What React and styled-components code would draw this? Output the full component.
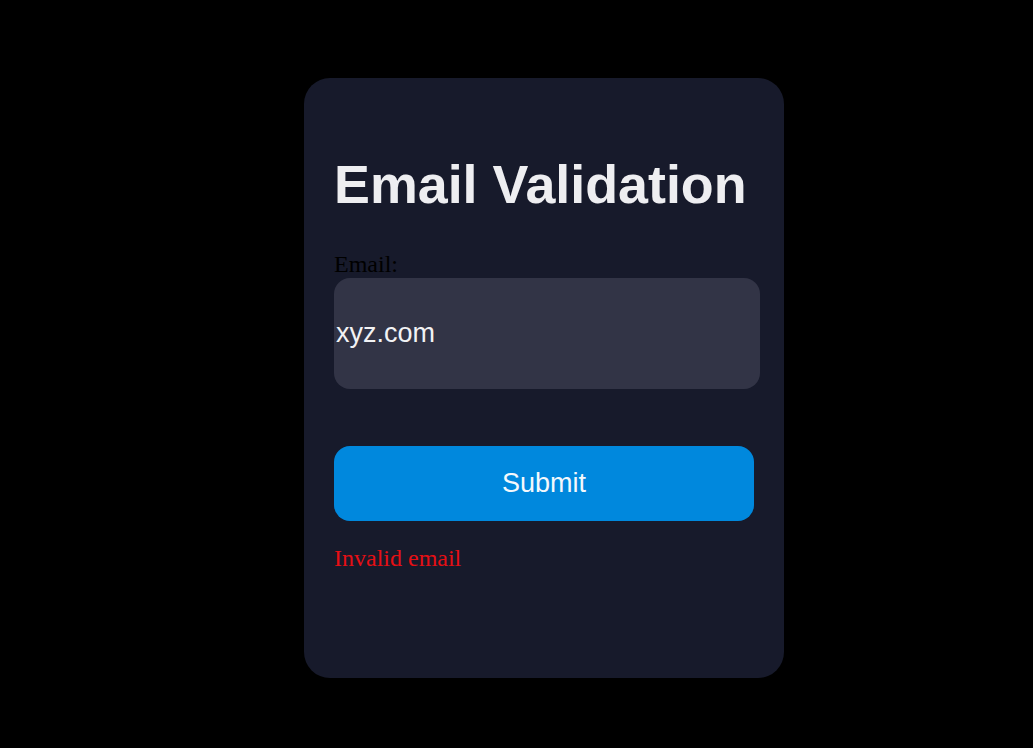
import React, { useState } from 'react';
import styled, { createGlobalStyle } from 'styled-components';

//  ----------------------------------------------------------------------------
//  Styles
//  ----------------------------------------------------------------------------
const GlobalStyle = createGlobalStyle`
    html, body {
        margin: 0;
        background: #000;
    }
`;

const Page = styled.div`
    min-height: 748px;
    padding: 78px 0 0 304px;
    box-sizing: border-box;
`;

const Card = styled.form`
    width: 480px;
    height: 600px;
    box-sizing: border-box;
    padding: 77px 30px 0;
    background: #171a2b;
    border-radius: 26px;
    display: flex;
    flex-direction: column;
    align-items: flex-start;
`;

const Title = styled.h1`
    margin: 0 0 37px;
    font-family: "Liberation Sans", Arial, sans-serif;
    font-size: 53.8px;
    font-weight: 700;
    line-height: 59px;
    color: #eeeef1;
`;

const Label = styled.label`
    display: block;
    font-family: "Liberation Serif", "Times New Roman", serif;
    font-size: 24px;
    line-height: 27px;
    color: #000;
`;

const Input = styled.input`
    width: 426px;
    height: 111px;
    box-sizing: border-box;
    margin: 0 0 57px;
    padding: 0 2px;
    border: none;
    outline: none;
    border-radius: 16px;
    background: #323446;
    color: #f2f2f4;
    font-family: "Liberation Sans", Arial, sans-serif;
    font-size: 27px;
`;

const Button = styled.button`
    width: 420px;
    height: 75px;
    border: none;
    border-radius: 16px;
    background: #0088dd;
    color: #f4f8fc;
    font-family: "Liberation Sans", Arial, sans-serif;
    font-size: 27px;
    cursor: pointer;
`;

const Error = styled.p`
    margin: 24px 0 0;
    font-family: "Liberation Serif", "Times New Roman", serif;
    font-size: 24px;
    line-height: 27px;
    color: #e60f14;
`;

//  ----------------------------------------------------------------------------
//  Container
//  ----------------------------------------------------------------------------
const App = () => {
    const [email, setEmail] = useState('xyz.com');

    return (
        <Page>
            <GlobalStyle />
            <Card onSubmit={(e) => e.preventDefault()}>
                <Title>Email Validation</Title>
                <Label htmlFor="email">Email:</Label>
                <Input
                    id="email"
                    type="text"
                    value={email}
                    onChange={(e) => setEmail(e.target.value)}
                />
                <Button type="submit">Submit</Button>
                <Error>Invalid email</Error>
            </Card>
        </Page>
    );
};

export default App;
